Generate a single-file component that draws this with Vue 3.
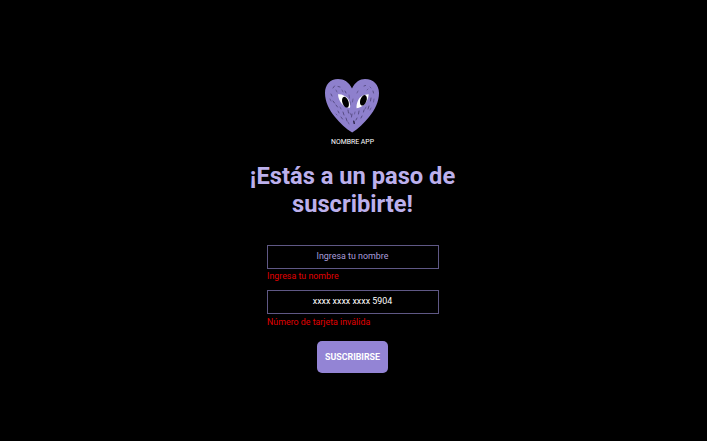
<script setup>
import { ref } from 'vue'

const name = ref('')
const card = ref('xxxx xxxx xxxx 5904')
</script>

<template>
  <main class="page">
    <svg class="logo" viewBox="0 0 56 54" aria-hidden="true">
      <path class="heart" d="M28 9.500C31 3 36 0 41 0C49.500 0 55 6 55 14C55 22.500 51 31 45 38C40 44 34 50 28.200 53.500C22 50 16 44 11 38C5 31 1 22.500 1 14C1 6 6 0 14 0C20 0 25 3 28 9.500Z" />
      <g class="scratches">
        <path d="M9 9l1.500-2M14 7.500l2 .5M7 15l1 2M9 22l1.500 2M12 26l1.500 2M21 12l1 2M26 23v3M40 7l1.500-.5M49 12l.5 2M47 19l-.5 3M45 27l-1 3M40 31l-.5 2M35 32l-.5 3M24 31l.5 3M19 33l1 3M14 32l1 2M17 38l1.500 2M22 39l1 3M28 35l-.5 3M33 39l-1 2M38 37l-1 2" />
        <path class="fine" d="M12 11l1 2M18 11l1 2M6 20l1 2M16 28l1 2M29 20l-.5 3M25 16l.5 3M43 11l1-1M46 8l1 1M42 28l-1 2M47 29l-1 2M12 35l1 1M26 34l1 2M31 33l-.5 2M24 43l1 2M50 20l-.5 3M34 12l-1 2" />
        <path class="bold" d="M29.800 42l.4 2.500" />
      </g>
      <path class="white" d="M14 15.300C18 15 22 17 24.500 20.500C26 23.500 26.500 26.500 26 28.800C19.500 28.500 14.500 23 14 15.300Z" />
      <ellipse cx="21.500" cy="23.200" rx="3.100" ry="5.600" transform="rotate(-20 21.500 23.200)" />
      <path class="white" d="M44.700 15.300C40 15.500 36 17.500 34.300 21C32.700 24 32.300 27 32.600 29.200C39 28.500 44 23.500 44.700 15.300Z" />
      <ellipse cx="39.400" cy="21.300" rx="3.100" ry="5.500" transform="rotate(20 39.400 21.300)" />
    </svg>
    <p class="brand">NOMBRE APP</p>
    <h1>¡Estás a un paso de<br>suscribirte!</h1>
    <form @submit.prevent>
      <input v-model="name" class="field" placeholder="Ingresa tu nombre">
      <p class="error">Ingresa tu nombre</p>
      <input v-model="card" class="field">
      <p class="error last">Número de tarjeta inválida</p>
      <button>SUSCRIBIRSE</button>
    </form>
  </main>
</template>

<style>
body {
  background: #000;
}
</style>

<style scoped>
.page {
  display: flex;
  flex-direction: column;
  align-items: center;
  box-sizing: border-box;
  width: 705px;
  height: 441px;
  padding-top: 79px;
  font-family: Roboto, sans-serif;
  color: #fff;
}
.logo {
  width: 56px;
  height: 54px;
  margin-right: 1px;
}
.heart {
  fill: #8e80cd;
}
.scratches {
  fill: none;
  stroke: #3b315e;
  stroke-width: 0.65;
  stroke-linecap: round;
}
.fine {
  stroke-width: 0.45;
}
.bold {
  stroke: #17112b;
  stroke-width: 1.2;
}
.white {
  fill: #fff;
}
.brand {
  margin: 5px 0 0;
  font-size: 6.9px;
  line-height: 9px;
}
h1 {
  margin: 15px 0 0;
  font-size: 23.7px;
  line-height: 28px;
  font-weight: 700;
  text-align: center;
  color: #bcb0ec;
}
form {
  display: flex;
  flex-direction: column;
  width: 171px;
  margin-top: 27px;
}
.field {
  box-sizing: border-box;
  width: 172px;
  height: 24px;
  margin: 0;
  padding: 0 1px 2px 0;
  border: 1px solid #5f5885;
  border-radius: 0;
  outline: none;
  background: #000;
  color: #fff;
  font: 8.9px Roboto, sans-serif;
  text-align: center;
}
.field::placeholder {
  color: #aa9edc;
  opacity: 1;
}
.error {
  margin: 1px 0 8px;
  font-size: 8.85px;
  line-height: 12px;
  color: #e00000;
}
.last {
  margin: 2px 0 13px;
}
button {
  align-self: center;
  width: 71px;
  height: 32px;
  padding: 0;
  border: 0;
  border-radius: 5px;
  background: #9384d5;
  color: #fff;
  font: 700 8.85px Roboto, sans-serif;
}
</style>
